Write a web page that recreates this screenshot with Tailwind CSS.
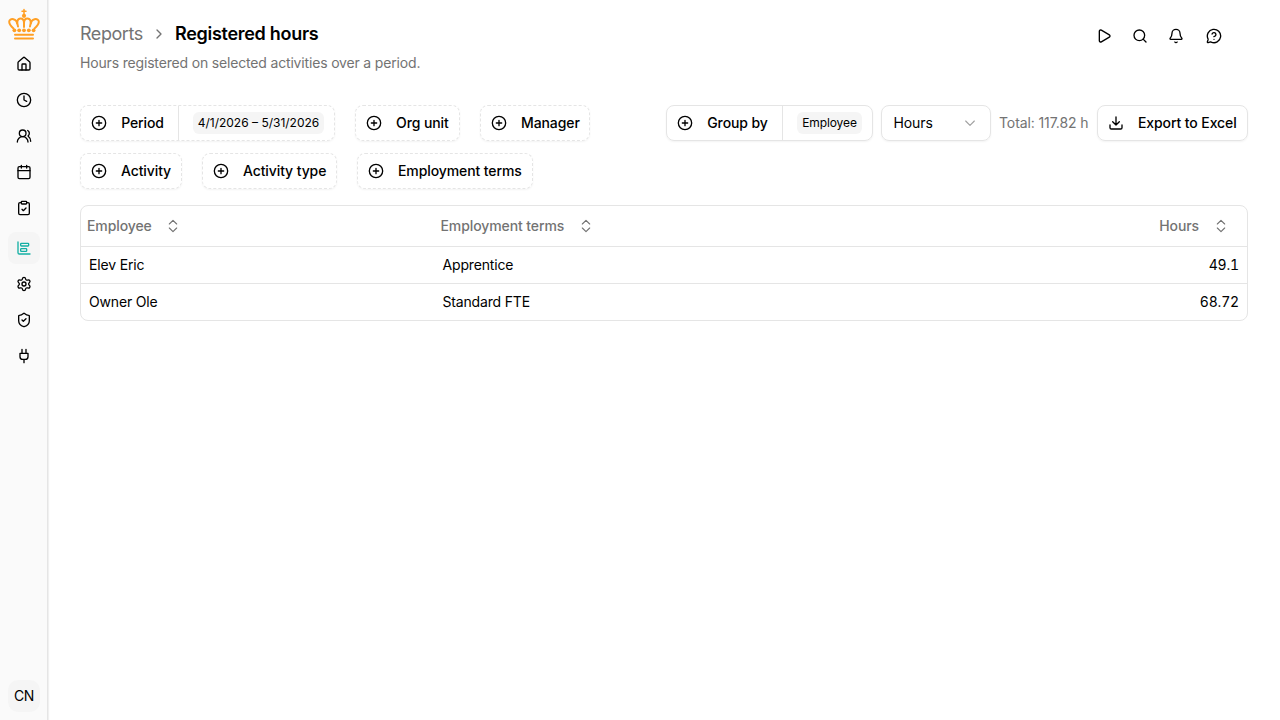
<!DOCTYPE html>
<html lang="en">
<head>
<meta charset="utf-8">
<title>Registered hours</title>
<script src="https://cdn.jsdelivr.net/npm/@tailwindcss/browser@4"></script>
</head>
<body class="flex h-screen overflow-hidden bg-white font-['Inter',sans-serif] text-sm tracking-[-0.17px] text-black antialiased">
<svg class="hidden">
  <symbol id="plus" viewBox="0 0 24 24"><circle cx="12" cy="12" r="10"/><path d="M8 12h8M12 8v8"/></symbol>
  <symbol id="sort" viewBox="0 0 24 24"><path d="m6.500 15 5.500 5.300 5.500-5.300M6.500 9l5.500-5.300 5.500 5.300"/></symbol>
</svg>

<aside class="flex w-12 shrink-0 flex-col items-center border-r border-neutral-200 bg-neutral-50 pt-2 pb-2 shadow-[1px_0_1px_rgba(0,0,0,0.06)] [&_svg]:fill-none [&_svg]:stroke-current [&_svg]:stroke-2">
  <div class="ml-px flex h-8 w-8 shrink-0 text-[#ff9f24]">
    <svg class="h-8 w-8" viewBox="0 0 32 32" stroke-linecap="round" stroke-linejoin="round">
      <path stroke-width="1.500" d="M16 1.500v5M14 3.300h4"/>
      <circle cx="16" cy="7.800" r="2.100" fill="currentColor" stroke="none"/>
      <path stroke-width="2" d="M5.500 20.500C3.300 18.500 1.200 16 1.200 13.800c0-2 2-3.200 4.200-2.600 2.300.600 3.600 2.200 3.700 4.600M26.500 20.500c2.200-2 4.300-4.500 4.300-6.700 0-2-2-3.200-4.200-2.600-2.300.600-3.600 2.200-3.700 4.600M10 18.500c-1.600-4.500-.6-8 2.600-8 2.300 0 3.400 1.800 3.400 4.500v4M22 18.500c1.600-4.500.6-8-2.600-8-2.300 0-3.400 1.800-3.400 4.500"/>
      <g fill="currentColor" stroke="none"><circle cx="6.400" cy="22.300" r="1.900"/><circle cx="11.200" cy="22.300" r="1.900"/><circle cx="16" cy="22.300" r="1.900"/><circle cx="20.800" cy="22.300" r="1.900"/><circle cx="25.600" cy="22.300" r="1.900"/></g>
      <path stroke-width="2" d="M7 26.800h18M7 30.500h18"/>
    </svg>
  </div>
  <nav class="mt-2 flex flex-col gap-1 [&>a]:flex [&>a]:size-8 [&>a]:items-center [&>a]:justify-center [&>a]:rounded-lg [&_svg]:size-4">
    <a><svg viewBox="0 0 24 24" stroke-linecap="round" stroke-linejoin="round"><path d="M15 21v-8a1 1 0 0 0-1-1h-4a1 1 0 0 0-1 1v8"/><path d="M3 10a2 2 0 0 1 .709-1.528l7-5.999a2 2 0 0 1 2.582 0l7 5.999A2 2 0 0 1 21 10v9a2 2 0 0 1-2 2H5a2 2 0 0 1-2-2z"/></svg></a>
    <a><svg viewBox="0 0 24 24" stroke-linecap="round" stroke-linejoin="round"><circle cx="12" cy="12" r="10"/><path d="M12 6v6l4 2"/></svg></a>
    <a><svg viewBox="0 0 24 24" stroke-linecap="round" stroke-linejoin="round"><path d="M18 21a8 8 0 0 0-16 0"/><circle cx="10" cy="8" r="5"/><path d="M22 20c0-3.370-2-6.500-4-8a5 5 0 0 0-.45-8.300"/></svg></a>
    <a><svg viewBox="0 0 24 24" stroke-linecap="round" stroke-linejoin="round"><path d="M8 2v4M16 2v4M3 10h18"/><rect width="18" height="18" x="3" y="4" rx="2"/></svg></a>
    <a><svg viewBox="0 0 24 24" stroke-linecap="round" stroke-linejoin="round"><rect width="8" height="4" x="8" y="2" rx="1"/><path d="M16 4h2a2 2 0 0 1 2 2v14a2 2 0 0 1-2 2H6a2 2 0 0 1-2-2V6a2 2 0 0 1 2-2h2M9 14l2 2 4-4"/></svg></a>
    <a class="mt-1 bg-neutral-100 text-[#14b0a4]"><svg viewBox="0 0 24 24" stroke-linecap="round" stroke-linejoin="round"><path d="M3 3v16a2 2 0 0 0 2 2h16"/><rect x="7" y="13" width="9" height="4" rx="1"/><rect x="7" y="5" width="12" height="4" rx="1"/></svg></a>
    <a><svg viewBox="0 0 24 24" stroke-linecap="round" stroke-linejoin="round"><path d="M9.671 4.136a2.340 2.340 0 0 1 4.659 0 2.340 2.340 0 0 0 3.319 1.915 2.340 2.340 0 0 1 2.330 4.033 2.340 2.340 0 0 0 0 3.831 2.340 2.340 0 0 1-2.330 4.033 2.340 2.340 0 0 0-3.319 1.915 2.340 2.340 0 0 1-4.659 0 2.340 2.340 0 0 0-3.320-1.915 2.340 2.340 0 0 1-2.330-4.033 2.340 2.340 0 0 0 0-3.831A2.340 2.340 0 0 1 6.350 6.051a2.340 2.340 0 0 0 3.319-1.915"/><circle cx="12" cy="12" r="3"/></svg></a>
    <a><svg viewBox="0 0 24 24" stroke-linecap="round" stroke-linejoin="round"><path d="M20 13c0 5-3.500 7.500-7.660 8.950a1 1 0 0 1-.67-.01C7.500 20.500 4 18 4 13V6a1 1 0 0 1 1-1c2 0 4.500-1.200 6.240-2.720a1.170 1.170 0 0 1 1.520 0C14.510 3.810 17 5 19 5a1 1 0 0 1 1 1z"/><path d="m9 12 2 2 4-4"/></svg></a>
    <a><svg viewBox="0 0 24 24" stroke-linecap="round" stroke-linejoin="round"><path d="M12 22v-5M9 8V2M15 8V2M18 8v5a4 4 0 0 1-4 4h-4a4 4 0 0 1-4-4V8Z"/></svg></a>
  </nav>
  <div class="mt-auto flex size-8 items-center justify-center rounded-[10px] bg-neutral-100 pl-px tracking-[-0.4px]">CN</div>
</aside>

<main class="flex-1 pr-8 pl-8">
  <header class="flex h-[105px] justify-between">
    <div class="pt-5">
      <div class="flex h-7 items-center text-lg leading-7">
        <span class="w-[63px] tracking-[-0.45px] whitespace-nowrap text-neutral-500">Reports</span>
        <svg class="mx-2 size-4 fill-none stroke-neutral-500 stroke-2" viewBox="0 0 24 24" stroke-linecap="round" stroke-linejoin="round"><path d="m9 18 6-6-6-6"/></svg>
        <h1 class="font-semibold tracking-[-0.29px] whitespace-nowrap">Registered hours</h1>
      </div>
      <p class="mt-[5px] leading-5 text-neutral-500">Hours registered on selected activities over a period.</p>
    </div>
    <div class="mt-7 mr-[26px] flex h-4 gap-5 [&_svg]:size-4 [&_svg]:fill-none [&_svg]:stroke-current [&_svg]:stroke-2">
      <svg viewBox="0 0 24 24" stroke-linecap="round" stroke-linejoin="round"><path d="M5 5a2 2 0 0 1 3.008-1.728l11.997 6.998a2 2 0 0 1 .003 3.458l-12 7A2 2 0 0 1 5 19z"/></svg>
      <svg viewBox="0 0 24 24" stroke-linecap="round" stroke-linejoin="round"><path d="m21 21-4.340-4.340"/><circle cx="11" cy="11" r="8"/></svg>
      <svg viewBox="0 0 24 24" stroke-linecap="round" stroke-linejoin="round"><path d="M10.268 21a2 2 0 0 0 3.464 0"/><path d="M3.262 15.326A1 1 0 0 0 4 17h16a1 1 0 0 0 .74-1.673C19.410 13.956 18 12.499 18 8A6 6 0 0 0 6 8c0 4.499-1.411 5.956-2.738 7.326"/></svg>
      <svg class="ml-0.5" viewBox="0 0 24 24" stroke-linecap="round" stroke-linejoin="round"><path d="M2.992 16.342a2 2 0 0 1 .094 1.167l-1.065 3.290a1 1 0 0 0 1.236 1.168l3.413-.998a2 2 0 0 1 1.099.092 10 10 0 1 0-4.777-4.719"/><path d="M9.090 9a3 3 0 0 1 5.830 1c0 2-3 3-3 3M12 17h.01"/></svg>
    </div>
  </header>

  <section class="flex items-start justify-between font-medium tracking-[-0.1px] [&_button]:flex [&_button]:h-9 [&_button]:shrink-0 [&_button]:items-center [&_button]:rounded-lg [&_button]:border [&_button]:border-neutral-200 [&_button]:whitespace-nowrap [&_button]:shadow-xs [&_svg]:size-4 [&_svg]:shrink-0 [&_svg]:fill-none [&_svg]:stroke-current [&_svg]:stroke-2">
    <div class="flex w-[540px] flex-wrap gap-x-5 gap-y-3 [&_button]:border-dashed [&_button]:pl-2.5 [&_svg]:mr-3.5">
      <button class="w-[255px]"><svg stroke-linecap="round"><use href="#plus"/></svg><span class="w-[43px]">Period</span><span class="ml-3.5 h-full w-px bg-neutral-200"></span><span class="ml-3.5 flex h-[22px] w-[131px] items-center justify-center rounded-md bg-neutral-100 text-xs font-normal tracking-normal">4/1/2026 – 5/31/2026</span></button>
      <button class="w-[105px]"><svg stroke-linecap="round"><use href="#plus"/></svg>Org unit</button>
      <button class="w-[110px]"><svg stroke-linecap="round"><use href="#plus"/></svg>Manager</button>
      <button class="w-[102px]"><svg stroke-linecap="round"><use href="#plus"/></svg>Activity</button>
      <button class="w-[135px]"><svg stroke-linecap="round"><use href="#plus"/></svg>Activity type</button>
      <button class="w-[176px]"><svg stroke-linecap="round"><use href="#plus"/></svg>Employment terms</button>
    </div>
    <div class="flex items-center gap-2">
      <button class="w-[207px] pl-2.5"><svg class="mr-3.5" stroke-linecap="round"><use href="#plus"/></svg><span class="w-[61px]">Group by</span><span class="ml-3.5 h-full w-px bg-neutral-200"></span><span class="ml-3.5 flex h-[22px] w-[65px] items-center justify-center rounded-md bg-neutral-100 text-xs font-normal">Employee</span></button>
      <button class="w-[110px] justify-between pr-3 pl-[11.5px] font-normal">Hours<svg class="text-neutral-400" viewBox="0 0 24 24" stroke-linecap="round" stroke-linejoin="round"><path stroke-width="1.700" d="m5.500 9 6.500 6.500L18.500 9"/></svg></button>
      <span class="w-[90px] font-normal whitespace-nowrap text-neutral-500">Total: 117.82 h</span>
      <button class="w-[151px] pl-2.5"><svg class="mr-3.5" viewBox="0 0 24 24" stroke-linecap="round" stroke-linejoin="round"><path d="M12 15V3M21 15v4a2 2 0 0 1-2 2H5a2 2 0 0 1-2-2v-4M7 10l5 5 5-5"/></svg>Export to Excel</button>
    </div>
  </section>

  <section class="mt-4 overflow-hidden rounded-lg border border-neutral-200 [&_svg]:size-4 [&_svg]:fill-none [&_svg]:stroke-neutral-500 [&_svg]:stroke-[1.700]">
    <div class="grid h-10 grid-cols-[353.500px_1fr_auto] items-center font-medium tracking-[-0.1px] text-neutral-500">
      <div class="flex items-center pl-1.5"><span class="w-[78px]">Employee</span><svg stroke-linecap="round" stroke-linejoin="round"><use href="#sort"/></svg></div>
      <div class="flex items-center gap-3.5 pl-1.5">Employment terms<svg stroke-linecap="round" stroke-linejoin="round"><use href="#sort"/></svg></div>
      <div class="flex items-center gap-3.5 pr-[18px]">Hours<svg stroke-linecap="round" stroke-linejoin="round"><use href="#sort"/></svg></div>
    </div>
    <div class="grid h-[37px] grid-cols-[353.500px_1fr_auto] items-center border-t border-neutral-200 px-2"><span>Elev Eric</span><span>Apprentice</span><span class="tabular-nums">49.1</span></div>
    <div class="grid h-[37px] grid-cols-[353.500px_1fr_auto] items-center border-t border-neutral-200 px-2"><span>Owner Ole</span><span>Standard FTE</span><span class="tabular-nums">68.72</span></div>
  </section>
</main>
</body>
</html>
